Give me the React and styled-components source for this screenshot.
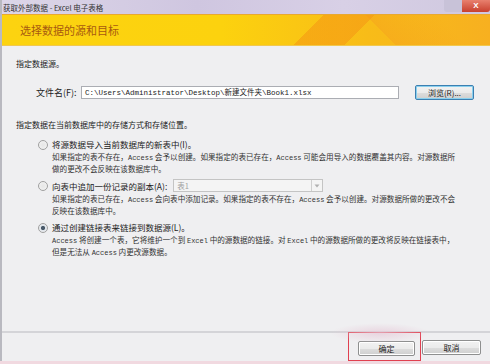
import React from "react";
import styled, { createGlobalStyle } from "styled-components";

const GlobalStyle = createGlobalStyle`
  html, body { margin: 0; padding: 0; }
  body {
    width: 490px;
    height: 364px;
    overflow: hidden;
    background: #f1d9e0;
    font-family: "Noto Sans CJK SC", "Noto Sans", sans-serif;
  }
`;

const Window = styled.div`
  width: 490px;
  height: 361px;
  display: flex;
  flex-direction: column;
  background: #efeff1;
  border-left: 2px solid #b9b9c0;
  box-sizing: border-box;
`;

const TitleBar = styled.div`
  height: 14px;
  display: flex;
  align-items: center;
  justify-content: space-between;
  background: linear-gradient(90deg, #dcd6e8 0%, #cfc6e0 40%, #d8d0e6 70%, #cfc8df 100%);
  font-size: 7.5px;
  color: #333;
  padding-left: 1px;
`;

const WinButtons = styled.div`
  display: flex;
  height: 12px;
  align-self: flex-start;
`;

const WinBtn = styled.div`
  width: ${(p) => p.w}px;
  height: 12px;
  background: ${(p) => p.bg};
  color: #fff;
  font-size: 8px;
  line-height: 12px;
  text-align: center;
  border-radius: ${(p) => p.r};
  font-family: "Liberation Sans", sans-serif;
  font-weight: bold;
`;

const Banner = styled.div`
  height: 32px;
  display: flex;
  align-items: center;
  padding-left: 18px;
  border-top: 1px solid #e8a830;
  border-bottom: 1px solid #f0c850;
  box-sizing: border-box;
  background:
    linear-gradient(135deg, transparent 62%, rgba(245, 150, 20, 0.55) 62%, rgba(245, 150, 20, 0.55) 72%, transparent 72%),
    linear-gradient(45deg, transparent 76%, rgba(245, 160, 30, 0.45) 76%, transparent 90%),
    linear-gradient(90deg, #fcd310 0%, #fcd20e 45%, #f8bc18 75%, #f7b020 100%);
  font-size: 11px;
  color: #a85a10;
`;

const Body = styled.div`
  flex: 1;
  padding: 12px 12px 0 14px;
  font-size: 8px;
  color: #222;
  display: flex;
  flex-direction: column;
`;

const SectionLabel = styled.div`
  line-height: 12px;
  margin-bottom: ${(p) => p.mb}px;
`;

const FileRow = styled.div`
  display: flex;
  align-items: center;
  padding-left: 20px;
  margin-bottom: 19px;
`;

const FieldLabel = styled.span`
  font-size: 9px;
  width: 45px;
`;

const PathInput = styled.div`
  width: 318px;
  height: 13px;
  border: 1px solid #abadb3;
  background: #fff;
  font-family: "Liberation Mono", "Noto Sans CJK SC", monospace;
  font-size: 7.5px;
  line-height: 13px;
  padding-left: 3px;
  box-sizing: border-box;
  white-space: nowrap;
  overflow: hidden;
`;

const Button = styled.div`
  width: ${(p) => p.w}px;
  height: 15px;
  margin-left: ${(p) => p.ml || 0}px;
  border: 1px solid ${(p) => (p.focus ? "#3c7fb1" : "#8e8f8f")};
  box-shadow: ${(p) => (p.focus ? "inset 0 0 0 1px #8ad0ee" : "inset 0 0 0 1px #fff")};
  border-radius: 2px;
  background: linear-gradient(#f2f2f2 0%, #ebebeb 50%, #dddddd 51%, #cfcfcf 100%);
  font-size: 8px;
  line-height: 13px;
  text-align: center;
  box-sizing: border-box;
  color: #222;
`;

const Option = styled.div`
  display: flex;
  padding-left: 22px;
  margin-bottom: ${(p) => p.mb}px;
`;

const Radio = styled.div`
  width: 8px;
  height: 8px;
  border-radius: 50%;
  border: 1px solid #a0a0a0;
  background: radial-gradient(circle, ${(p) => (p.checked ? "#4a5a6a 0, #4a5a6a 1.8px, #dfe4ea 2.4px" : "#e6e6e6 0")}, #f4f4f4);
  margin-top: 2px;
  flex-shrink: 0;
`;

const OptionText = styled.div`
  margin-left: 4px;
  display: flex;
  flex-direction: column;
`;

const OptionTitle = styled.div`
  display: flex;
  align-items: center;
  line-height: 12px;
  font-size: 8.5px;
  margin-bottom: 2px;
`;

const Desc = styled.div`
  line-height: 9.5px;
  font-size: 7.6px;
  white-space: nowrap;
  color: #333;
`;

const Latin = styled.span`
  font-family: "Liberation Mono", monospace;
  font-size: 7px;
`;

const Select = styled.div`
  width: 150px;
  height: 13px;
  margin-left: 6px;
  border: 1px solid #c4c4c4;
  background: #f4f4f4;
  display: flex;
  align-items: center;
  justify-content: space-between;
  box-sizing: border-box;
  padding-left: 3px;
  color: #a0a0a0;
  font-size: 7.5px;
`;

const DropArrow = styled.div`
  width: 10px;
  height: 11px;
  border-left: 1px solid #cfcfcf;
  display: flex;
  align-items: center;
  justify-content: center;
`;

const Footer = styled.div`
  height: 28px;
  border-top: 2px solid #d4d4d8;
  display: flex;
  align-items: center;
  justify-content: flex-end;
  padding-right: 9px;
  margin-top: 2px;
`;

const Highlight = styled.div`
  border: 1.5px solid #e04050;
  padding: 8px 5px 4px 9px;
  margin-top: -2px;
  display: flex;
`;

const Glow = styled.div`
  position: absolute;
  right: 60px;
  bottom: 18px;
  width: 100px;
  height: 20px;
  background: radial-gradient(ellipse, rgba(230, 200, 215, 0.7), transparent 70%);
  pointer-events: none;
`;

const Wrap = styled.div`
  position: relative;
`;

export default function App() {
  return (
    <>
      <GlobalStyle />
      <Wrap>
        <Window>
          <TitleBar>
            <span>获取外部数据 - Excel 电子表格</span>
            <WinButtons>
              <WinBtn w={18} bg="#c8c2d8" r="0 0 0 3px" />
              <WinBtn w={28} bg="linear-gradient(#e8806e, #c8402e)" r="0 0 3px 0">
                X
              </WinBtn>
            </WinButtons>
          </TitleBar>
          <Banner>选择数据的源和目标</Banner>
          <Body>
            <SectionLabel mb={15}>指定数据源。</SectionLabel>
            <FileRow>
              <FieldLabel>文件名(F):</FieldLabel>
              <PathInput>C:\Users\Administrator\Desktop\新建文件夹\Book1.xlsx</PathInput>
              <Button w={59} ml={16} focus>
                浏览(R)...
              </Button>
            </FileRow>
            <SectionLabel mb={7}>指定数据在当前数据库中的存储方式和存储位置。</SectionLabel>
            <Option mb={6}>
              <Radio />
              <OptionText>
                <OptionTitle>将源数据导入当前数据库的新表中(I)。</OptionTitle>
                <Desc>
                  如果指定的表不存在，<Latin>Access</Latin> 会予以创建。如果指定的表已存在，<Latin>Access</Latin> 可能会用导入的数据覆盖其内容。对源数据所
                  <br />
                  做的更改不会反映在该数据库中。
                </Desc>
              </OptionText>
            </Option>
            <Option mb={6}>
              <Radio />
              <OptionText>
                <OptionTitle>
                  向表中追加一份记录的副本(A):
                  <Select>
                    表1
                    <DropArrow>
                      <svg width="6" height="4" viewBox="0 0 6 4">
                        <path d="M0.5 0.5 L3 3.5 L5.5 0.5 Z" fill="#b0b0b0" />
                      </svg>
                    </DropArrow>
                  </Select>
                </OptionTitle>
                <Desc>
                  如果指定的表已存在，<Latin>Access</Latin> 会向表中添加记录。如果指定的表不存在，<Latin>Access</Latin> 会予以创建。对源数据所做的更改不会
                  <br />
                  反映在该数据库中。
                </Desc>
              </OptionText>
            </Option>
            <Option mb={0}>
              <Radio checked />
              <OptionText>
                <OptionTitle>通过创建链接表来链接到数据源(L)。</OptionTitle>
                <Desc>
                  <Latin>Access</Latin> 将创建一个表，它将维护一个到 <Latin>Excel</Latin> 中的源数据的链接。对 <Latin>Excel</Latin> 中的源数据所做的更改将反映在链接表中，
                  <br />
                  但是无法从 <Latin>Access</Latin> 内更改源数据。
                </Desc>
              </OptionText>
            </Option>
          </Body>
          <Footer>
            <Highlight>
              <Button w={57}>确定</Button>
            </Highlight>
            <Button w={59} ml={1}>
              取消
            </Button>
          </Footer>
        </Window>
        <Glow />
      </Wrap>
    </>
  );
}
